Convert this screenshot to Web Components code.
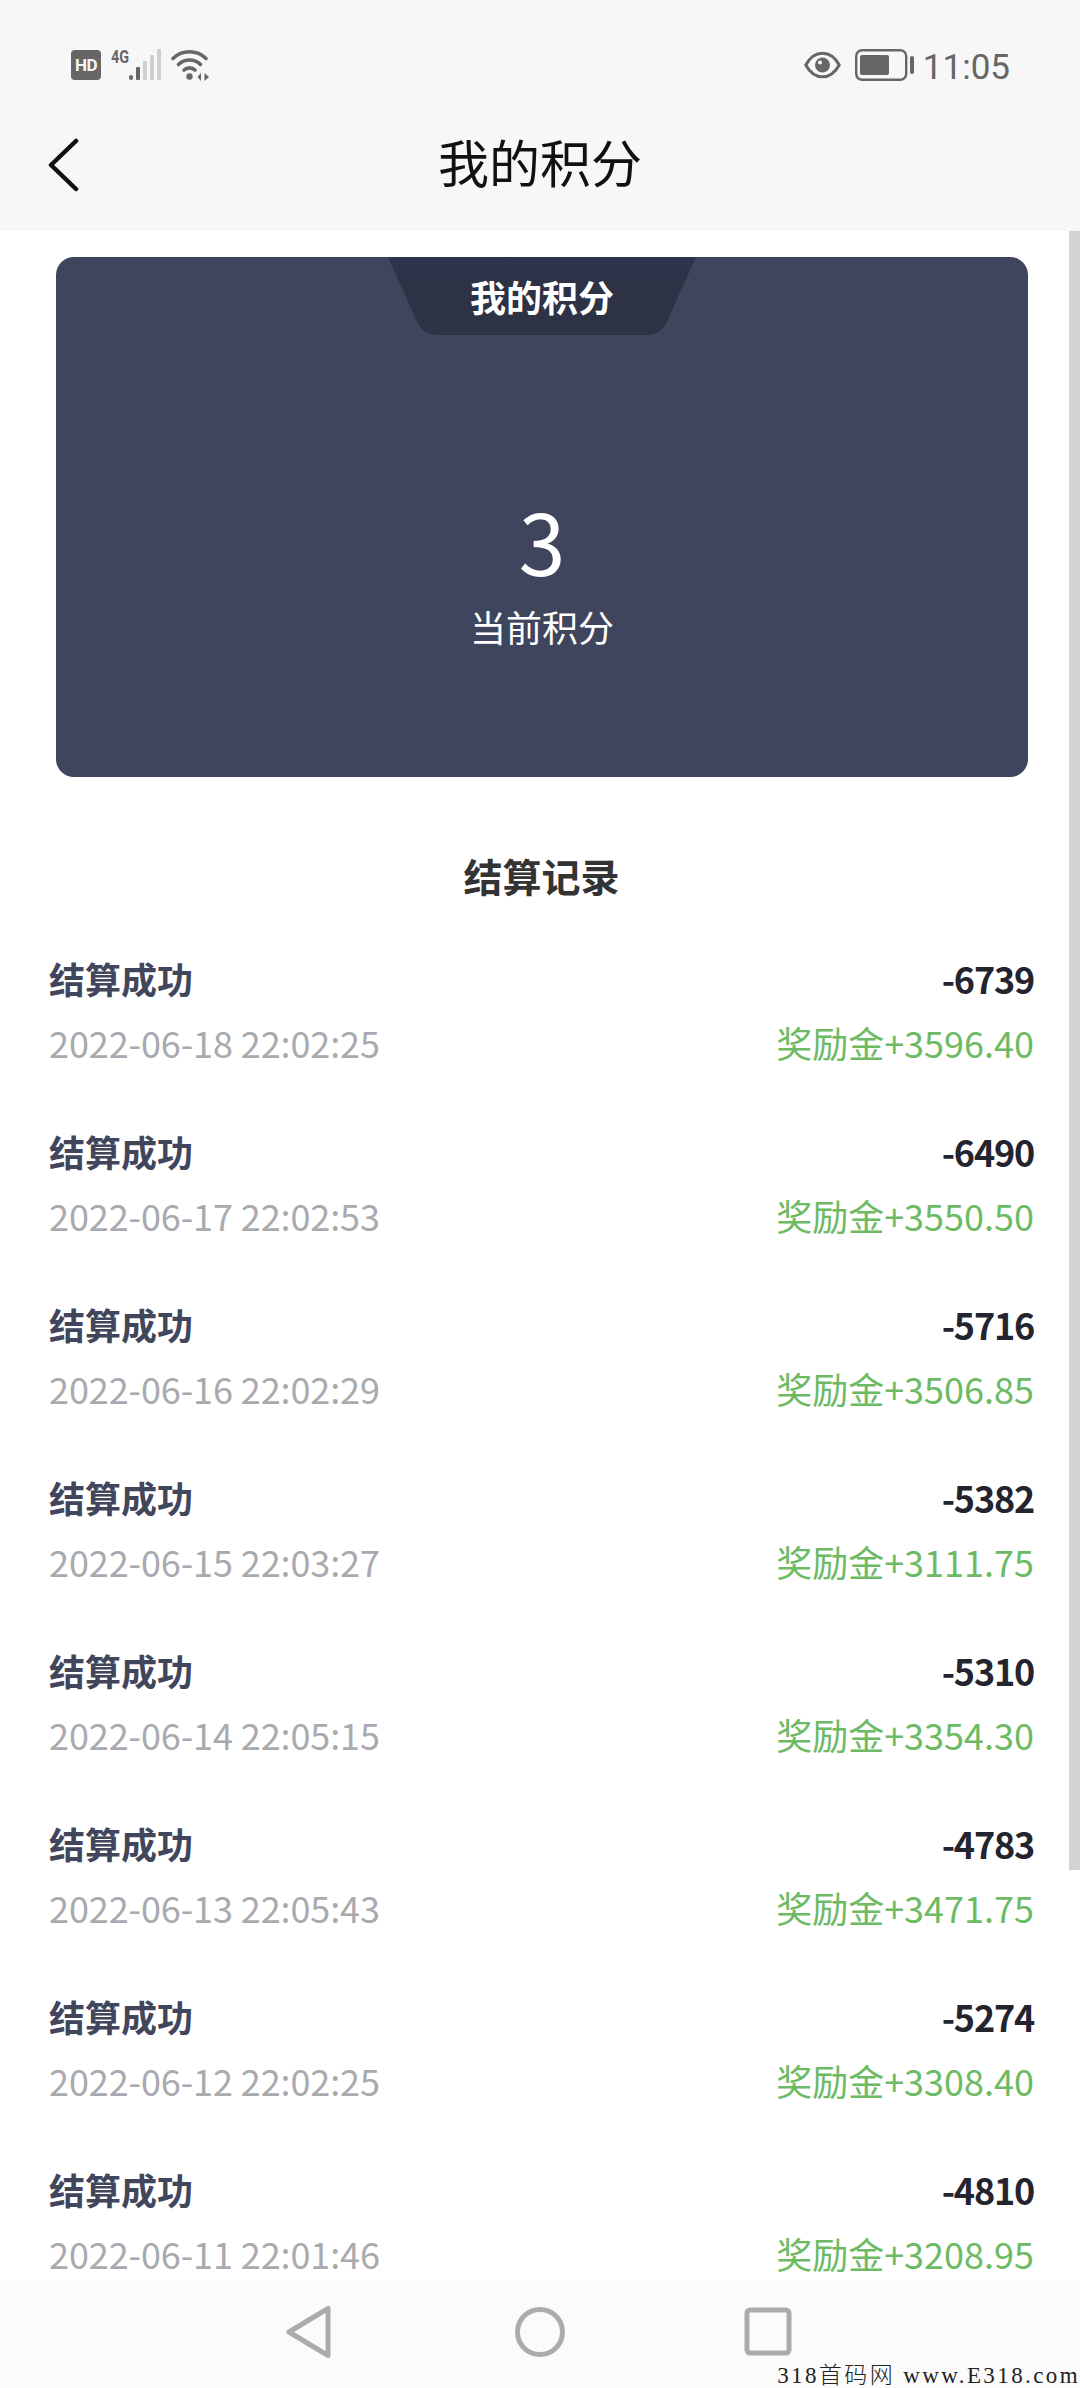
<!DOCTYPE html>
<html lang="zh">
<head>
<meta charset="utf-8">
<title>我的积分</title>
<style>
  html, body { margin: 0; padding: 0; background: #fff; }
  body { font-family: "Noto Sans CJK SC", "Noto Sans", sans-serif; }
</style>
</head>
<body>
<points-page>
  <status-bar time="11:05"></status-bar>
  <nav-header>我的积分</nav-header>
  <points-card tab="我的积分" label="当前积分">3</points-card>
  <record-list heading="结算记录">
    <record-row date="2022-06-18 22:02:25" amount="-6739" bonus="奖励金+3596.40">结算成功</record-row>
    <record-row date="2022-06-17 22:02:53" amount="-6490" bonus="奖励金+3550.50">结算成功</record-row>
    <record-row date="2022-06-16 22:02:29" amount="-5716" bonus="奖励金+3506.85">结算成功</record-row>
    <record-row date="2022-06-15 22:03:27" amount="-5382" bonus="奖励金+3111.75">结算成功</record-row>
    <record-row date="2022-06-14 22:05:15" amount="-5310" bonus="奖励金+3354.30">结算成功</record-row>
    <record-row date="2022-06-13 22:05:43" amount="-4783" bonus="奖励金+3471.75">结算成功</record-row>
    <record-row date="2022-06-12 22:02:25" amount="-5274" bonus="奖励金+3308.40">结算成功</record-row>
    <record-row date="2022-06-11 22:01:46" amount="-4810" bonus="奖励金+3208.95">结算成功</record-row>
  </record-list>
  <soft-keys></soft-keys>
  <water-mark>318首码网 www.E318.com</water-mark>
</points-page>

<script>
"use strict";
function makeTemplate(html) {
    const t = document.createElement('template');
    t.innerHTML = html;
    return t.content;
}

class PointsPage extends HTMLElement {
    constructor() {
        super();
        this.attachShadow({ mode: 'open' });
        this.shadowRoot.appendChild(PointsPage._template.cloneNode(true));
    }
}
PointsPage._template = makeTemplate(`
  <style>
  :host {
    display: block;
    position: relative;
    width: 1080px;
    height: 2388px;
    overflow: hidden;
    background: #fff;
  }
  .scroll {
    position: absolute;
    right: 0;
    top: 231px;
    width: 11px;
    height: 1639px;
    background: #d3d3d3;
  }
  </style>
  <slot></slot>
  <div class="scroll"></div>
`);
customElements.define('points-page', PointsPage);

class StatusBar extends HTMLElement {
    constructor() {
        super();
        this.attachShadow({ mode: 'open' });
        this.shadowRoot.appendChild(StatusBar._template.cloneNode(true));
        this.shadowRoot.querySelector('.time').textContent = this.getAttribute('time');
    }
}
StatusBar._template = makeTemplate(`
  <style>
  :host {
    display: flex;
    justify-content: space-between;
    align-items: flex-start;
    box-sizing: border-box;
    height: 100px;
    padding: 49px 70px 0 71px;
    background: #f7f7f7;
    color: #666;
  }
  .side { display: flex; align-items: center; height: 32px; }
  .hd {
    width: 30px;
    height: 30px;
    border-radius: 4px;
    background: #666;
    color: #f7f7f7;
    font: 700 17px/30px "Roboto", sans-serif;
    text-align: center;
    letter-spacing: -0.5px;
  }
  .net { position: relative; width: 50px; height: 32px; margin-left: 10px; }
  .net b {
    position: absolute;
    left: 0;
    top: -1px;
    font: 700 18px/18px "Roboto", sans-serif;
    transform: scaleX(.8);
    transform-origin: left top;
  }
  .net svg { position: absolute; left: 18px; top: 0; }
  .wifi { margin-left: 10px; }
  .eye { margin-right: 14px; }
  .time {
    margin-left: 9px;
    padding-top: 5px;
    font: 400 35px/34px "Roboto", sans-serif;
    color: #666;
  }
  </style>
  <div class="side">
    <div class="hd">HD</div>
    <div class="net">
      <b>4G</b>
      <svg width="33" height="32" viewBox="0 0 33 32">
        <rect x="0" y="26" width="4" height="5" rx="2" fill="#666"/>
        <rect x="7" y="18" width="4" height="13" rx="1" fill="#666"/>
        <rect x="14" y="12" width="4" height="19" rx="1" fill="#cfcfcf"/>
        <rect x="21" y="6" width="4" height="25" rx="1" fill="#cfcfcf"/>
        <rect x="28" y="0" width="4" height="31" rx="1" fill="#cfcfcf"/>
      </svg>
    </div>
    <svg class="wifi" width="39" height="32" viewBox="0 0 39 32" fill="none" stroke="#666" stroke-width="3.600" stroke-linecap="round">
      <path d="M2 9.500C11 .5 26 .5 35 9.500"/>
      <path d="M7.500 15.500C13.500 9.500 23.500 9.500 29.500 15.500"/>
      <path d="M13 21C16 18.200 21 18.200 24 21"/>
      <circle cx="18.500" cy="27.500" r="3.200" fill="#666" stroke="none"/>
      <path d="M30 24l-3.500 4 3.500 4zM33.500 24l4.500 4-4.500 4z" fill="#666" stroke="none"/>
    </svg>
  </div>
  <div class="side">
    <svg class="eye" width="37" height="28" viewBox="0 0 37 28" fill="none">
      <path d="M1.800 14C6 6.200 12 2.200 18.500 2.200S31 6.200 35.200 14C31 21.800 25 25.800 18.500 25.800S6 21.800 1.800 14Z" stroke="#666" stroke-width="3"/>
      <circle cx="18.500" cy="14" r="7.500" fill="#666"/>
      <circle cx="16" cy="11.500" r="2" fill="#f7f7f7"/>
    </svg>
    <svg width="59" height="32" viewBox="0 0 59 32" fill="none">
      <rect x="1.200" y="1.200" width="50" height="29.600" rx="6" stroke="#666" stroke-width="2.400"/>
      <rect x="5" y="6" width="29" height="20" rx="2" fill="#666"/>
      <rect x="55" y="7" width="4" height="18" rx="2" fill="#666"/>
    </svg>
    <div class="time"></div>
  </div>
`);
customElements.define('status-bar', StatusBar);

class NavHeader extends HTMLElement {
    constructor() {
        super();
        this.attachShadow({ mode: 'open' });
        this.shadowRoot.appendChild(NavHeader._template.cloneNode(true));
    }
}
NavHeader._template = makeTemplate(`
  <style>
  :host {
    display: flex;
    position: relative;
    justify-content: center;
    align-items: center;
    box-sizing: border-box;
    height: 131px;
    padding-bottom: 9px;
    background: #f7f7f7;
    color: #111;
    font-size: 51px;
    line-height: 70px;
  }
  svg { position: absolute; left: 46px; top: 38px; }
  </style>
  <svg width="34" height="54" viewBox="0 0 34 54" fill="none" stroke="#111" stroke-width="4.500" stroke-linecap="round" stroke-linejoin="round">
    <path d="M30 3L5 27L30 51"/>
  </svg>
  <slot></slot>
`);
customElements.define('nav-header', NavHeader);

class PointsCard extends HTMLElement {
    constructor() {
        super();
        this.attachShadow({ mode: 'open' });
        this.shadowRoot.appendChild(PointsCard._template.cloneNode(true));
        this.shadowRoot.querySelector('.tab span').textContent = this.getAttribute('tab');
        this.shadowRoot.querySelector('.label').textContent = this.getAttribute('label');
    }
}
PointsCard._template = makeTemplate(`
  <style>
  :host {
    display: flex;
    flex-direction: column;
    align-items: center;
    box-sizing: border-box;
    width: 972px;
    height: 520px;
    margin: 26px 0 0 56px;
    border-radius: 18px;
    background: #3e455c;
    color: #fff;
  }
  .tab {
    display: flex;
    justify-content: center;
    align-items: center;
    width: 308px;
    height: 78px;
    background: linear-gradient(#2c3350, #2d3245 30%);
    clip-path: path('M0 0H308L281 60Q275 78 258 78H50Q33 78 27 60Z');
    font-size: 36px;
    font-weight: 700;
  }
  .num {
    margin-top: 155px;
    font-size: 84px;
    font-weight: 400;
    line-height: 100px;
  }
  .label {
    margin-top: 11px;
    font-size: 36px;
    font-weight: 400;
    line-height: 50px;
  }
  </style>
  <div class="tab"><span></span></div>
  <div class="num"><slot></slot></div>
  <div class="label"></div>
`);
customElements.define('points-card', PointsCard);

class RecordList extends HTMLElement {
    constructor() {
        super();
        this.attachShadow({ mode: 'open' });
        this.shadowRoot.appendChild(RecordList._template.cloneNode(true));
        this.shadowRoot.querySelector('h2').textContent = this.getAttribute('heading');
    }
}
RecordList._template = makeTemplate(`
  <style>
  :host { display: block; padding: 0 46px 0 49px; }
  h2 {
    margin: 73px 0 46px;
    font-size: 39px;
    font-weight: 700;
    line-height: 50px;
    color: #333;
    text-align: center;
  }
  </style>
  <h2></h2>
  <slot></slot>
`);
customElements.define('record-list', RecordList);

class RecordRow extends HTMLElement {
    constructor() {
        super();
        this.attachShadow({ mode: 'open' });
        this.shadowRoot.appendChild(RecordRow._template.cloneNode(true));
        for (const key of ['date', 'amount', 'bonus']) {
            this.shadowRoot.querySelector('.' + key).textContent = this.getAttribute(key);
        }
    }
}
RecordRow._template = makeTemplate(`
  <style>
  :host {
    display: grid;
    grid-template-columns: 1fr auto;
    grid-auto-rows: 64px;
    align-items: center;
    height: 173px;
    font-size: 36px;
  }
  .title { font-weight: 700; color: #41465c; }
  .amount { font-weight: 700; color: #23242e; text-align: right; letter-spacing: -1.200px; }
  .date { font-weight: 400; color: #a9aaaf; letter-spacing: -0.1px; }
  .bonus { font-weight: 400; color: #6cba64; text-align: right; }
  </style>
  <div class="title"><slot></slot></div>
  <div class="amount"></div>
  <div class="date"></div>
  <div class="bonus"></div>
`);
customElements.define('record-row', RecordRow);

class SoftKeys extends HTMLElement {
    constructor() {
        super();
        this.attachShadow({ mode: 'open' });
        this.shadowRoot.appendChild(SoftKeys._template.cloneNode(true));
    }
}
SoftKeys._template = makeTemplate(`
  <style>
  :host {
    display: flex;
    position: absolute;
    left: 0;
    right: 0;
    bottom: 0;
    justify-content: center;
    align-items: flex-start;
    gap: 182px;
    box-sizing: border-box;
    height: 108px;
    padding-top: 25px;
    background: #fbfbfb;
  }
  svg { display: block; }
  svg:last-child { margin-left: -3px; margin-right: 3px; }
  </style>
  <svg width="48" height="54" viewBox="0 0 48 54" fill="none" stroke="#ababab" stroke-width="5" stroke-linejoin="round">
    <path d="M43 3.500V50.500L4 27Z"/>
  </svg>
  <svg width="50" height="54" viewBox="0 0 50 54" fill="none" stroke="#ababab" stroke-width="5">
    <circle cx="25" cy="27" r="22.500"/>
  </svg>
  <svg width="48" height="54" viewBox="0 0 48 54" fill="none" stroke="#ababab" stroke-width="5" stroke-linejoin="round">
    <rect x="3" y="5" width="42" height="43" rx="3"/>
  </svg>
`);
customElements.define('soft-keys', SoftKeys);

class WaterMark extends HTMLElement {
    constructor() {
        super();
        this.attachShadow({ mode: 'open' });
        this.shadowRoot.appendChild(WaterMark._template.cloneNode(true));
    }
}
WaterMark._template = makeTemplate(`
  <style>
  :host {
    position: absolute;
    right: 0;
    bottom: 0;
    height: 24px;
    font: 300 23px/24px "Liberation Serif", "Noto Sans CJK SC", serif;
    color: #222;
    white-space: nowrap;
    letter-spacing: 2.400px;
  }
  </style>
  <slot></slot>
`);
customElements.define('water-mark', WaterMark);
</script>
</body>
</html>
